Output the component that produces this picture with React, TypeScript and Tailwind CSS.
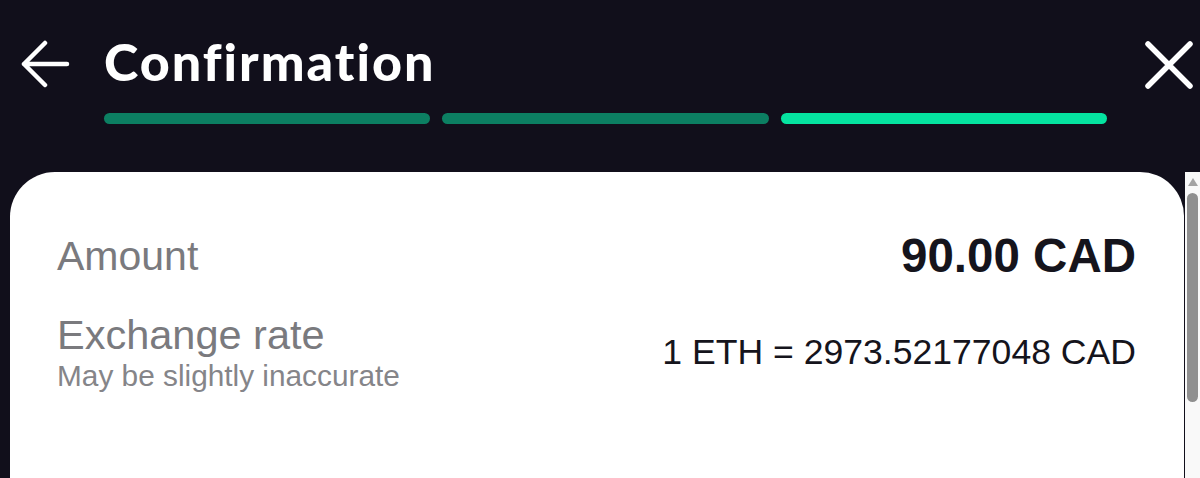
import React from "react";

export default function App() {
  return (
    <div className="h-[478px] w-[1200px] overflow-hidden bg-[#110f1b] flex flex-col">
      {/* Header */}
      <div className="flex items-start h-[172px]">
        <div className="w-[104px] pl-[20px] pt-[40px]">
          <svg width="50" height="48" viewBox="0 0 50 48" fill="none">
            <path d="M25 3 L4 24 L25 45 M4 24 H47" stroke="#ffffff" strokeWidth="4.5" strokeLinecap="round" strokeLinejoin="round" />
          </svg>
        </div>
        <div className="w-[1003px] flex flex-col pt-[30px]">
          <div className="text-white text-[52px] leading-[62px] font-black tracking-[2px]" style={{ fontFamily: "Lato, 'Noto Sans', sans-serif" }}>
            Confirmation
          </div>
          <div className="flex gap-[12px] mt-[21px]">
            <div className="flex-1 h-[11px] rounded-full bg-[#0c7f62]" />
            <div className="flex-1 h-[11px] rounded-full bg-[#0c7f62]" />
            <div className="flex-1 h-[11px] rounded-full bg-[#05e3a0]" />
          </div>
        </div>
        <div className="pl-[37px] pt-[40px]">
          <svg width="50" height="50" viewBox="0 0 50 50" fill="none">
            <path d="M4 4 L46 46 M46 4 L4 46" stroke="#ffffff" strokeWidth="5.5" strokeLinecap="round" />
          </svg>
        </div>
      </div>
      {/* Body */}
      <div className="flex flex-1">
        <div className="ml-[10px] flex-1 bg-white rounded-tl-[45px] rounded-tr-[44px] pl-[47px] pr-[48px] pt-[60px]" style={{ fontFamily: "'Liberation Sans', Arial, sans-serif" }}>
          <div className="flex items-center justify-between h-[48px]">
            <div className="text-[41px] leading-[48px] text-[#7a7a7e]">Amount</div>
            <div className="text-[47.5px] leading-[48px] font-bold text-[#15141c]">90.00 CAD</div>
          </div>
          <div className="flex items-center justify-between mt-[31px]">
            <div className="flex flex-col">
              <div className="text-[41.5px] leading-[48px] text-[#7a7a7e]">Exchange rate</div>
              <div className="text-[29.8px] leading-[34px] text-[#858589]">May be slightly inaccurate</div>
            </div>
            <div className="text-[35.6px] leading-[44px] text-[#15141c]">1 ETH = 2973.52177048 CAD</div>
          </div>
        </div>
        <div className="w-[15px] ml-[1px] bg-[#f9f9f9] flex flex-col items-center pt-[6px]">
          <div className="w-0 h-0 border-l-[5px] border-r-[5px] border-b-[8px] border-l-transparent border-r-transparent border-b-[#a3a3a3]" />
          <div className="w-[11px] h-[209px] mt-[7px] rounded-full bg-[#8f8f8f]" />
        </div>
      </div>
    </div>
  );
}
